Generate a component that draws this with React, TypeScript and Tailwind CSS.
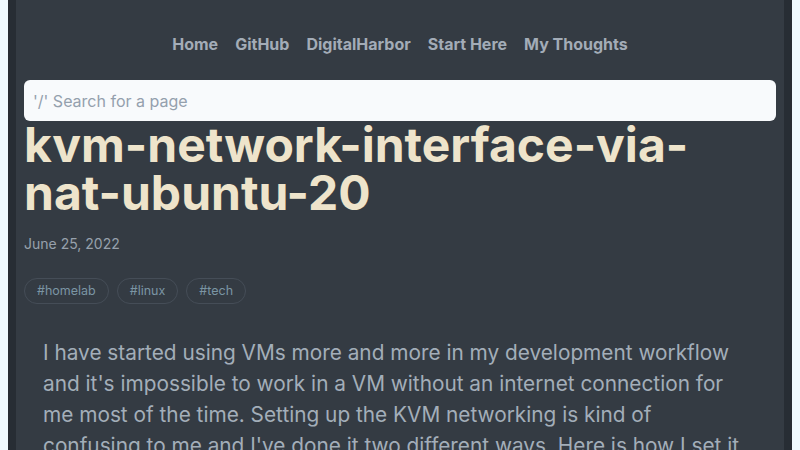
import React from 'react';

const navLinks = ['Home', 'GitHub', 'DigitalHarbor', 'Start Here', 'My Thoughts'];
const tags = ['homelab', 'linux', 'tech'];

export default function App() {
    return (
        <div
            className="flex min-h-[450px] w-full bg-[#f0faff] px-2"
            style={{ fontFamily: 'Inter, "Noto Sans", sans-serif' }}
        >
            <div className="flex flex-1 bg-[#272d34] px-2">
                <main className="flex-1 bg-[#343b43] px-2">
                    {/* Nav */}
                    <nav className="flex justify-center gap-[17px] pt-8 text-base font-bold leading-6 text-[#a3acb7]">
                        {navLinks.map((link) => (
                            <a key={link} href="#" className="hover:text-white">
                                {link}
                            </a>
                        ))}
                    </nav>

                    {/* Search */}
                    <div className="mt-6">
                        <input
                            type="text"
                            placeholder="'/' Search for a page"
                            className="h-[41px] w-full rounded-md bg-[#f8fafc] px-[9px] text-base text-gray-700 placeholder:text-[#94a0ad] focus:outline-none"
                        />
                    </div>

                    {/* Title */}
                    <h1 className="text-5xl font-bold leading-none text-[#eee4cb]">
                        kvm-network-interface-via-nat-ubuntu-20
                    </h1>

                    <div className="mt-[17px] text-sm leading-5 text-[#97a1ac]">June 25, 2022</div>

                    {/* Tags */}
                    <div className="mt-6 flex gap-2">
                        {tags.map((tag) => (
                            <span
                                key={tag}
                                className="rounded-full border border-[#454d57] px-3 py-1 text-[12.5px] leading-4 text-[#7b95a3]"
                            >
                                #{tag}
                            </span>
                        ))}
                    </div>

                    {/* Body */}
                    <article className="mt-[33px] ml-[19px] w-[708px] text-[20.8px] leading-[31px] text-[#a3aeb9]">
                        <p>
                            I have started using VMs more and more in my development workflow and it's impossible
                            to work in a VM without an internet connection for me most of the time. Setting up the
                            KVM networking is kind of confusing to me and I've done it two different ways. Here is
                            how I set it up.
                        </p>
                    </article>
                </main>
            </div>
        </div>
    );
}
